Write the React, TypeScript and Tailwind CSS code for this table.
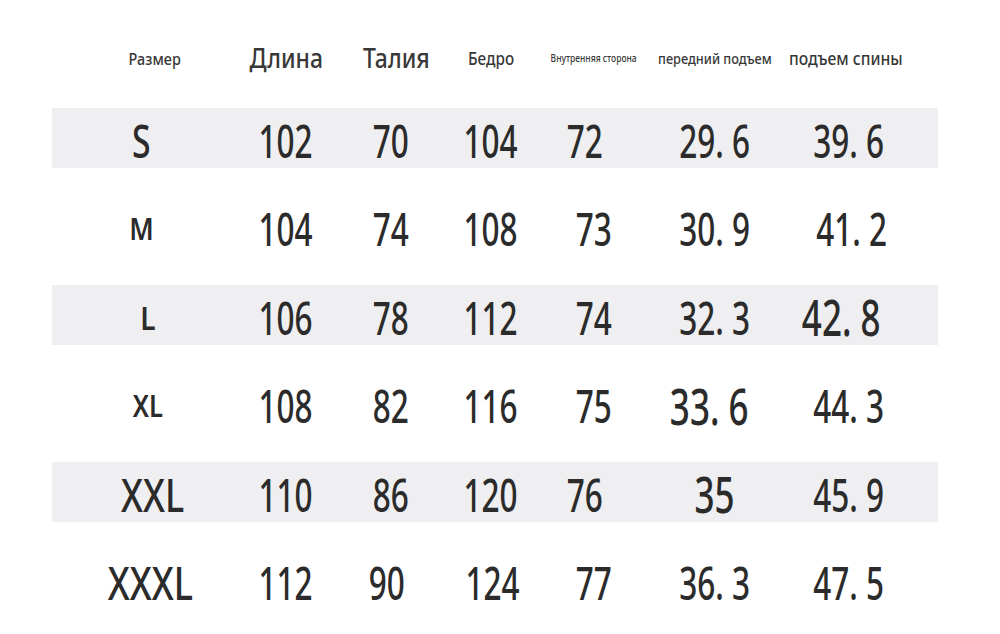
type Cell = { v: string; cls?: string };

const headers: Cell[] = [
  { v: "Размер", cls: "text-[17px] translate-x-[5px]" },
  { v: "Длина", cls: "text-[27px]" },
  { v: "Талия", cls: "text-[27px] translate-x-[5px]" },
  { v: "Бедро", cls: "text-[18px]" },
  { v: "Внутренняя сторона", cls: "text-[10px]" },
  { v: "передний подъем", cls: "text-[15px]" },
  { v: "подъем спины", cls: "text-[18.5px] -translate-x-[3px]" },
];

const rows: Cell[][] = [
  [
    { v: "S", cls: "text-[45px] scale-x-[0.75] -translate-x-[9px]" },
    { v: "102" },
    { v: "70" },
    { v: "104" },
    { v: "72", cls: "text-[45px] -translate-x-[9px]" },
    { v: "29. 6" },
    { v: "39. 6" },
  ],
  [
    { v: "M", cls: "text-[31px] scale-x-[0.85] font-semibold -translate-x-[9px]" },
    { v: "104" },
    { v: "74" },
    { v: "108" },
    { v: "73" },
    { v: "30. 9" },
    { v: "41. 2", cls: "text-[45px] translate-x-[3px]" },
  ],
  [
    { v: "L", cls: "text-[33px] scale-x-[0.85] font-semibold -translate-x-[2px]" },
    { v: "106" },
    { v: "78" },
    { v: "112" },
    { v: "74" },
    { v: "32. 3" },
    { v: "42. 8", cls: "text-[50px] -translate-x-[8px]" },
  ],
  [
    { v: "XL", cls: "text-[30px] scale-x-[0.85] font-semibold -translate-x-[2px]" },
    { v: "108" },
    { v: "82" },
    { v: "116" },
    { v: "75" },
    { v: "33. 6", cls: "text-[50px] -translate-x-[6px]" },
    { v: "44. 3" },
  ],
  [
    { v: "XXL", cls: "text-[45px] scale-x-[0.8] translate-x-[3px]" },
    { v: "110" },
    { v: "86" },
    { v: "120" },
    { v: "76", cls: "text-[45px] -translate-x-[9px]" },
    { v: "35", cls: "text-[50px]" },
    { v: "45. 9" },
  ],
  [
    { v: "XXXL", cls: "text-[45px] scale-x-[0.8]" },
    { v: "112" },
    { v: "90", cls: "text-[45px] -translate-x-[4px]" },
    { v: "124", cls: "text-[45px] translate-x-[2px]" },
    { v: "77" },
    { v: "36. 3" },
    { v: "47. 5" },
  ],
];

const grid = "grid grid-cols-[140px_132px_78px_122px_84px_158px_110px] pl-[28px]";

export default function App() {
  return (
    <div className="w-[1000px] h-[634px] bg-white text-[#2b2b2b] font-['Noto_Sans',sans-serif] font-medium">
      <div className="pt-[38px] px-[52px]">
        <div className={`${grid} h-[38px] items-center text-[#383838]`}>
          {headers.map((h) => (
            <div key={h.v} className="flex justify-center whitespace-nowrap">
              <span className={`inline-block scale-x-[0.85] ${h.cls ?? ""}`}>{h.v}</span>
            </div>
          ))}
        </div>
        <div className="mt-[32px] flex flex-col gap-[28.5px] w-[886px]">
          {rows.map((r, i) => (
            <div
              key={r[0].v}
              className={`${grid} h-[60px] items-center ${i % 2 === 0 ? "bg-[#efeff1]" : ""}`}
            >
              {r.map((c, j) => (
                <div key={j} className="flex justify-center whitespace-nowrap leading-none pt-[4px]">
                  <span className={`inline-block ${c.cls ?? "text-[45px] scale-x-[0.7]"} ${c.cls && j > 0 ? "scale-x-[0.7]" : ""}`}>
                    {c.v}
                  </span>
                </div>
              ))}
            </div>
          ))}
        </div>
      </div>
    </div>
  );
}
